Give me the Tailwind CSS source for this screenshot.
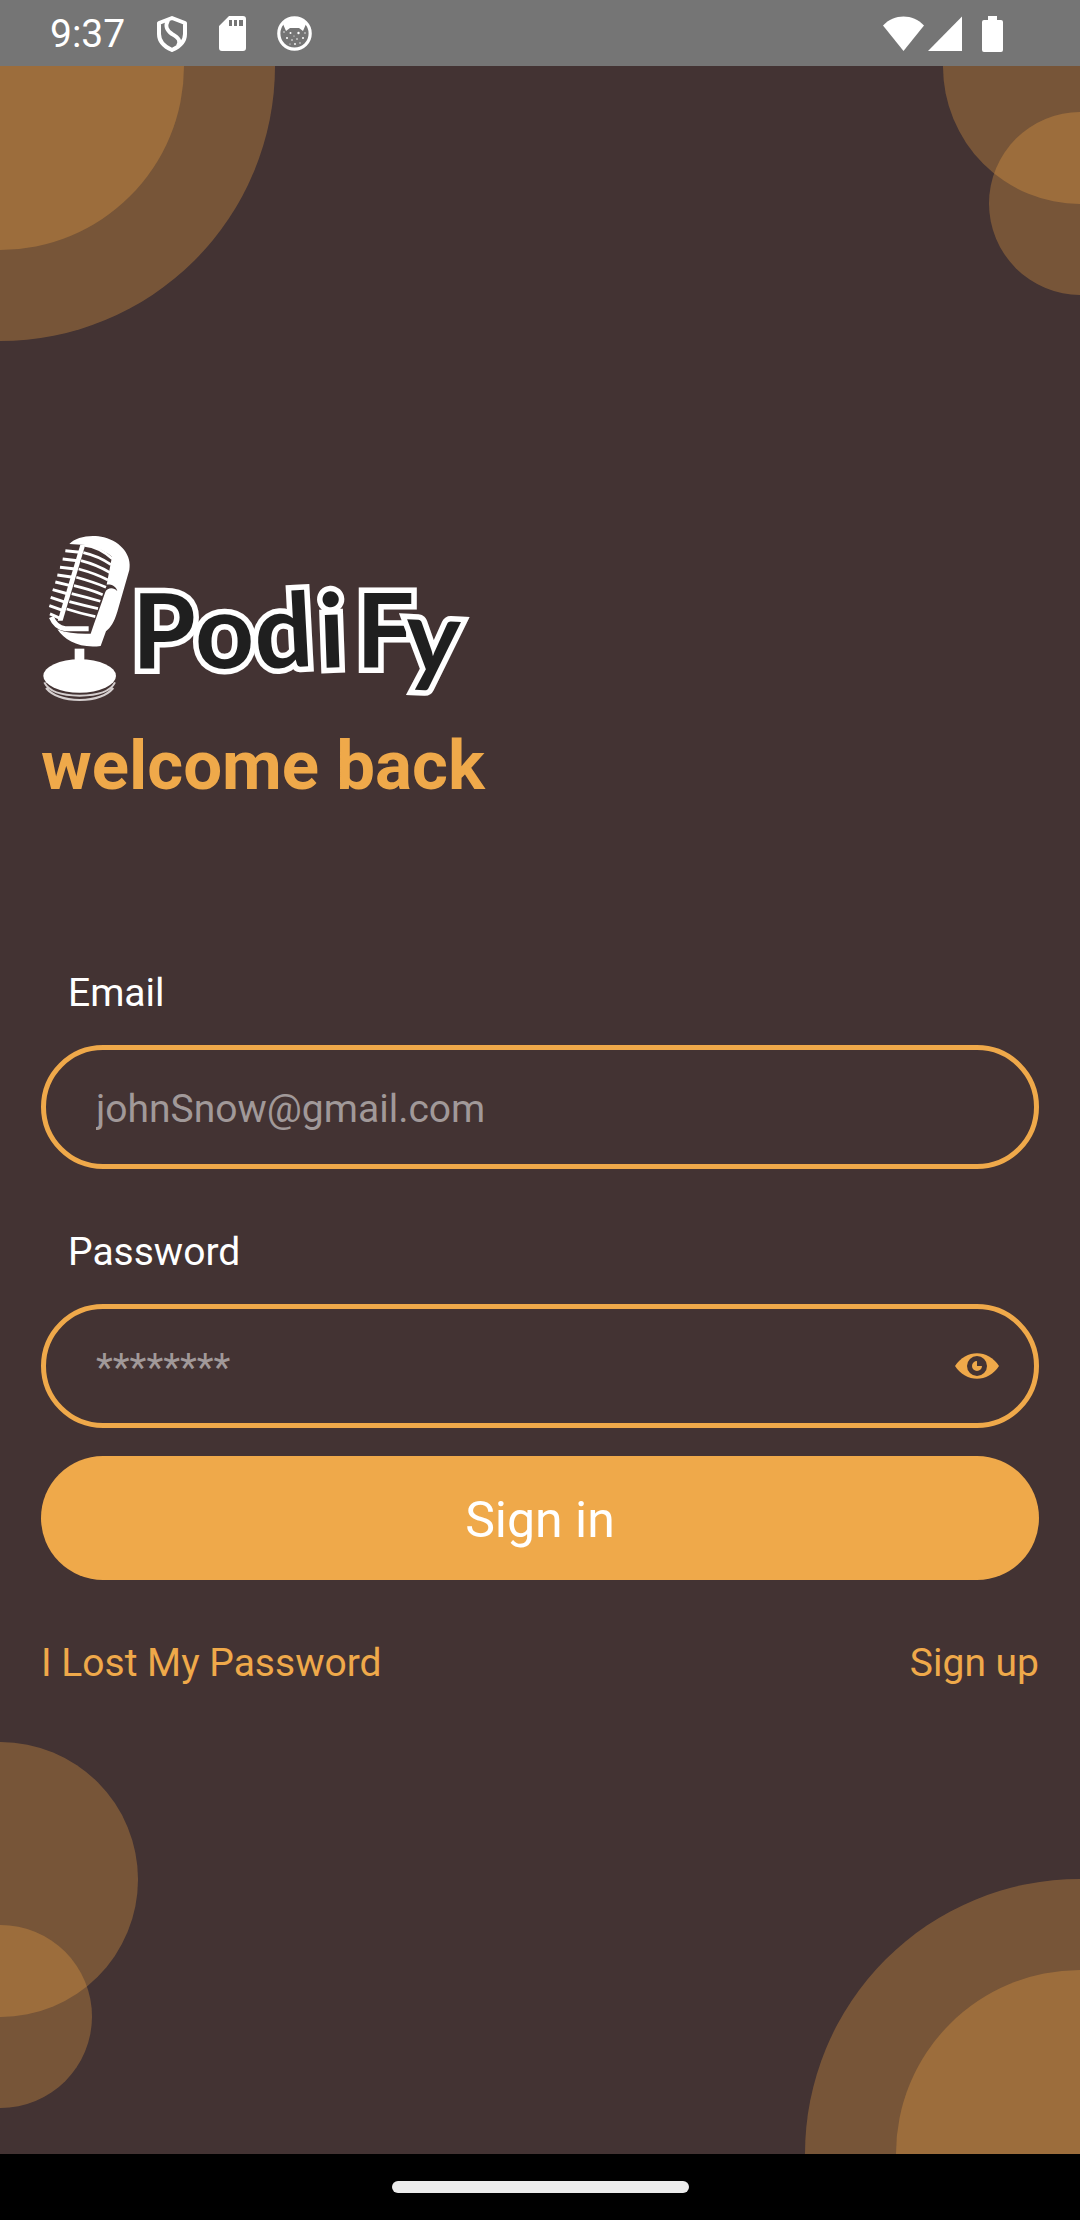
<!DOCTYPE html>
<html lang="en">
<head>
<meta charset="utf-8">
<meta name="viewport" content="width=device-width, initial-scale=1">
<title>Podify – Sign in</title>
<script src="https://cdn.jsdelivr.net/npm/@tailwindcss/browser@4"></script>
</head>
<body class="flex min-h-screen flex-col bg-[#433333] font-[Roboto,sans-serif] text-[39px] leading-[46px] text-white">

  <!-- Status bar -->
  <header class="flex h-[66px] shrink-0 items-center justify-between bg-[#757575] pl-[50px] pr-[77px] pt-px">
    <div class="flex items-center gap-[31px]">
      <span>9:37</span>
      <svg class="h-[38px] w-8" viewBox="0 0 32 38" fill="none" stroke="#fff" stroke-width="4" stroke-linejoin="round" aria-hidden="true">
        <path d="M16 3 L29 8 V19 C29 27 23 32 16 35 C9 32 3 27 3 19 V8 Z"/>
        <path d="M12 5 C9 11 10 15 16 19 C23 23 25 26 22 31"/>
      </svg>
      <svg class="h-[35px] w-[27px]" viewBox="0 0 27 35" aria-hidden="true">
        <path fill="#fff" fill-rule="evenodd" d="M10 0 H24 Q27 0 27 3 V32 Q27 35 24 35 H3 Q0 35 0 32 V10 Z M10 4 V10 H13 V4 Z M15 4 V10 H18 V4 Z M20 4 V10 H24 V4 Z"/>
      </svg>
      <svg class="h-[35px] w-[35px]" viewBox="0 0 35 35" aria-hidden="true">
        <circle cx="17.500" cy="17.500" r="15.700" fill="none" stroke="#fff" stroke-width="3.200"/>
        <path fill="#fff" d="M6 8 C10 1 25 1 29 8 L26 15 L22 12 H13 L9 15 Z"/>
        <g fill="#fff"><circle cx="13.500" cy="17" r="1"/><circle cx="21.500" cy="17" r="1.200"/><circle cx="7" cy="16" r=".7"/><circle cx="28" cy="17" r=".7"/><circle cx="10" cy="22" r="1"/><circle cx="15" cy="24" r=".8"/><circle cx="20" cy="23" r=".8"/><circle cx="26" cy="22" r="1"/><circle cx="18" cy="28" r=".9"/><circle cx="13" cy="28" r=".6"/><circle cx="23" cy="27" r=".7"/><circle cx="17" cy="20" r=".6"/></g>
      </svg>
    </div>
    <div class="flex items-center">
      <svg class="h-9 w-[41px]" viewBox="0 0 41 36" aria-hidden="true"><path fill="#fff" d="M0 9.500 C11 -2.500 30 -2.500 41 9.500 L20.500 35 Z"/></svg>
      <svg class="ml-1 h-9 w-[34px]" viewBox="0 0 34 36" aria-hidden="true"><path fill="#fff" d="M34 .5 V35 H0 Z"/></svg>
      <svg class="ml-5 h-9 w-[21px]" viewBox="0 0 21 36" aria-hidden="true"><path fill="#fff" d="M6 0 H15 V4 H19 Q21 4 21 6 V34 Q21 36 19 36 H2 Q0 36 0 34 V6 Q0 4 2 4 H6 Z"/></svg>
    </div>
  </header>

  <main class="relative flex flex-1 flex-col justify-center overflow-hidden px-[41px] pb-1">
    <!-- Corner rings -->
    <div class="absolute -left-[275px] -top-[275px] size-[550px] rounded-full bg-[#f2a645]/30"></div>
    <div class="absolute -left-[184px] -top-[184px] size-[368px] rounded-full bg-[#f2a645]/30"></div>
    <div class="absolute -right-[138px] -top-[137px] size-[275px] rounded-full bg-[#f2a645]/30"></div>
    <div class="absolute -right-[92px] top-[46px] size-[183px] rounded-full bg-[#f2a645]/30"></div>
    <div class="absolute -left-[137px] bottom-[137px] size-[275px] rounded-full bg-[#f2a645]/30"></div>
    <div class="absolute -left-[91px] bottom-[46px] size-[183px] rounded-full bg-[#f2a645]/30"></div>
    <div class="absolute -bottom-[275px] -right-[275px] size-[550px] rounded-full bg-[#f2a645]/30"></div>
    <div class="absolute -bottom-[184px] -right-[184px] size-[368px] rounded-full bg-[#f2a645]/30"></div>

    <div class="relative">
      <svg class="h-[174px] w-[430px] overflow-visible" viewBox="0 0 430 174" role="img" aria-label="PodiFy">
        <!-- Microphone -->
        <g transform="translate(-11 -10) scale(.3333)" fill="#fff">
          <path d="M118 72 C138 50 185 42 222 52 C275 66 306 108 298 150 L262 275 C252 308 242 322 228 334 L212 378 C150 386 104 362 82 328 C112 340 145 342 182 341 C200 290 214 250 226 216 C232 204 250 200 262 214 C258 196 240 192 230 194 L246 110 C222 90 190 78 166 75 Z"/>
          <path d="M151 74 H166 L98 302 H83 Z"/>
          <g stroke="#fff" stroke-width="9" fill="none">
            <path d="M106 92 L150 97 M98 117 L143 122 M90 142 L136 147 M82 165 L129 172 M76 186 L122 197 M68 209 L115 222 M62 232 L107 247 M58 257 L100 272 M60 282 L92 296"/>
            <path d="M164 76 Q206 80 247 116 M160 98 Q205 108 243 134 M153 122 Q200 134 240 158 M146 147 Q195 160 234 180 M139 172 Q190 186 228 202 M132 197 Q180 208 218 224 M125 221 Q170 232 211 244 M118 245 Q160 256 204 266 M110 267 Q150 280 196 290" stroke-width="8"/>
            <path d="M64 291 Q78 324 106 326 L176 326" stroke-width="15"/>
          </g>
          <path d="M124 425 H173 V456 H124 Z" fill="#b5adad"/>
          <path d="M134 386 H163 V456 H134 Z"/>
          <ellipse cx="149" cy="468" rx="109" ry="50"/>
          <path d="M43 487 Q62 526 149 527 Q236 526 255 487 M48 504 Q78 539 149 540 Q220 539 250 504" fill="none" stroke="#d5cfcf" stroke-width="6"/>
        </g>
        <!-- Wordmark -->
        <text font-family="Lato, sans-serif" font-weight="700" font-size="103" fill="#1f1f1f" stroke="#fff" stroke-width="11" paint-order="stroke" x="91 154 215 279 315 363" y="138 138 139 138 138 142" rotate="0 0 -3 -2 0 3">PodiFy</text>
      </svg>
      <h1 class="mt-[22px] text-[69px] font-bold leading-[80px] text-[#efa94a]">welcome back</h1>

      <form class="mt-[164px] flex flex-col">
        <label for="email" class="pl-[27px]">Email</label>
        <input id="email" type="email" placeholder="johnSnow@gmail.com" class="mt-[29px] h-[124px] w-full rounded-full border-5 border-[#efa94a] bg-transparent pl-[50px] pr-[50px] pt-1 outline-none placeholder:text-[#a19999]">

        <label for="password" class="mt-[60px] pl-[27px]">Password</label>
        <div class="mt-[29px] flex h-[124px] items-center rounded-full border-5 border-[#efa94a] pl-[50px] pr-[35px]">
          <input id="password" type="password" placeholder="********" class="h-full min-w-0 flex-1 bg-transparent pt-1 outline-none placeholder:text-[#a19999]">
          <button type="button" aria-label="Show password">
            <svg class="h-[26px] w-11" viewBox="0 0 44 26" aria-hidden="true">
              <path fill="#efa94a" d="M0 13 C11 -4 33 -4 44 13 C33 30 11 30 0 13 Z"/>
              <circle cx="22" cy="13" r="10" fill="#433333"/>
              <path fill="#efa94a" d="M22 8 A5 5 0 1 0 27 13 H22 Z"/>
            </svg>
          </button>
        </div>

        <button type="submit" class="mt-7 h-[124px] rounded-full bg-[#efa94a] pt-1 text-[50px] leading-[60px]">Sign in</button>
      </form>

      <nav class="mt-[60px] flex justify-between text-[#efa94a]">
        <a href="#lost-password">I Lost My Password</a>
        <a href="#sign-up">Sign up</a>
      </nav>
    </div>
  </main>

  <!-- Gesture bar -->
  <footer class="flex h-[66px] shrink-0 items-center justify-center bg-black">
    <div class="h-3 w-[297px] rounded-full bg-[#ececec]"></div>
  </footer>
</body>
</html>
